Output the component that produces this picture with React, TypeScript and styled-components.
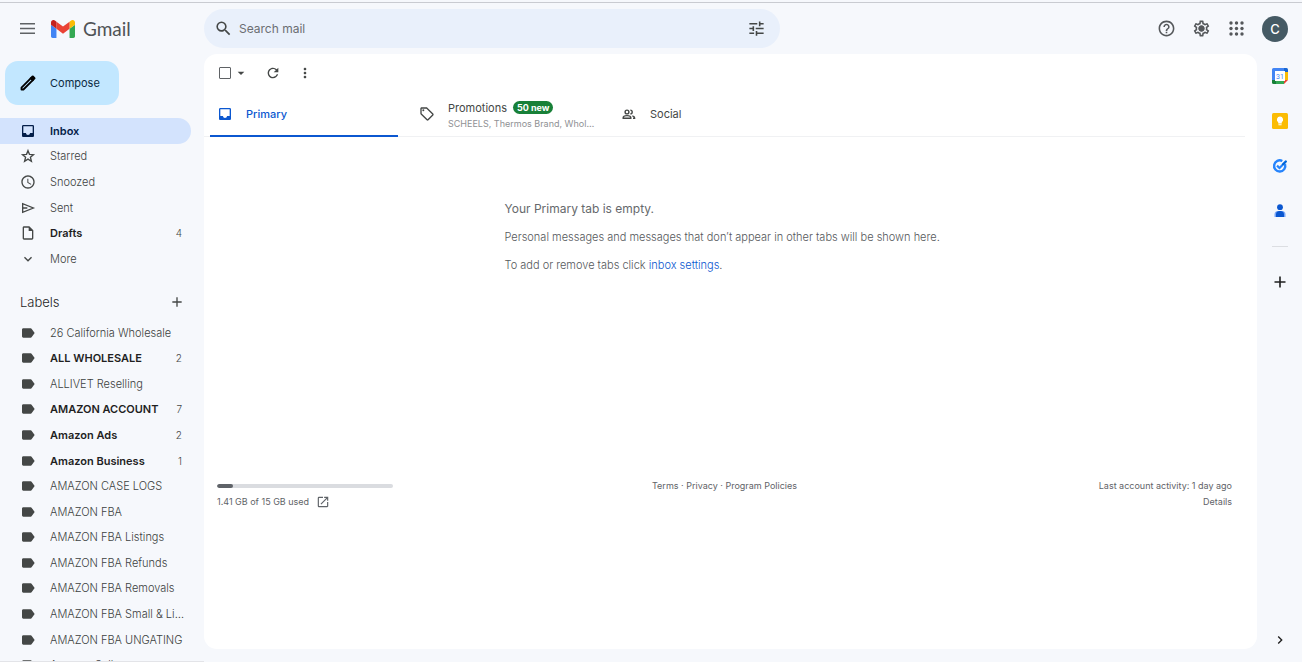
import React from "react";
import styled, { createGlobalStyle } from "styled-components";
import {
  MdSearch, MdTune, MdHelpOutline, MdOutlineSettings, MdInbox,
  MdAccessTime, MdOutlineInsertDriveFile, MdExpandMore, MdAdd, MdLabel, MdArrowDropDown,
  MdRefresh, MdMoreVert, MdOutlineSell, MdOpenInNew, MdChevronRight,
} from "react-icons/md";

const Global = createGlobalStyle`
  *, *::before, *::after { box-sizing: border-box; }
  body { margin: 0; background: #f6f8fc; color: #444746; font: 300 11px/16px Inter, "Liberation Sans", sans-serif; }
  button, input { font: inherit; color: inherit; }
  button { padding: 0; border: 0; background: none; display: flex; align-items: center; justify-content: center; }
  a { color: inherit; text-decoration: none; }
  ul { margin: 0; padding: 0; list-style: none; }
  p, h1, h2 { margin: 0; font-weight: inherit; }
  svg { display: block; flex: none; }
`;

const Page = styled.div`
  height: 100vh;
  padding-top: 2px;
  display: flex;
  flex-direction: column;
  overflow: hidden;
`;
const Header = styled.header`
  border-top: 1px solid #c9cbd1;
  height: 52px;
  flex: none;
  display: flex;
  align-items: center;
  padding-right: 14px;
`;
const Brand = styled.div`
  width: 204px;
  flex: none;
  display: flex;
  align-items: center;
  padding-left: 19px;
`;
const LogoLink = styled.a`
  display: flex;
  align-items: center;
  gap: 8px;
  margin-left: 15px;
  font: 19px/24px Lato, sans-serif;
  color: #505356;
`;
const SearchBox = styled.form`
  flex: 0 1 576px;
  height: 39px;
  border-radius: 20px;
  background: #e9f0fb;
  display: flex;
  align-items: center;
  padding: 0 14px 0 10px;
  gap: 6px;
`;
const SearchInput = styled.input`
  flex: 1;
  min-width: 0;
  border: 0;
  outline: 0;
  background: none;
  padding: 0;
  font-size: 12px;
  font-weight: 400;
  &::placeholder { color: #6b6e72; opacity: 1; }
`;
const HeaderActions = styled.div`
  margin-left: auto;
  display: flex;
  align-items: center;
  gap: 16px;
  color: #55585b;
`;
const Avatar = styled.button`
  width: 26px;
  height: 26px;
  border-radius: 50%;
  background: #455a64;
  color: #fff;
  font-size: 13px;
  font-weight: 500;
`;

const Body = styled.div`
  flex: 1;
  min-height: 0;
  display: flex;
`;
const Sidebar = styled.aside`
  width: 204px;
  flex: none;
  padding-top: 7px;
  overflow: hidden;
  border-bottom: 1px solid #e3e4e8;
`;
const Compose = styled.button`
  width: 114px;
  height: 44px;
  margin-left: 5px;
  border-radius: 13px;
  background: #c2e7ff;
  color: #0a2a42;
  justify-content: flex-start;
  padding-left: 13px;
  gap: 12px;
  font-weight: 400;
  svg { color: #000; }
`;
const FolderArea = styled.div`
  padding-top: 13px;
`;
const NavList = styled.ul<{ $min: number }>`
  display: grid;
  grid-template-columns: minmax(0, 1fr);
  grid-auto-rows: 1fr;
  min-height: ${(p) => p.$min}px;
  padding-right: 13px;
`;
const NavLink = styled.a<{ $active?: boolean; $bold?: boolean }>`
  height: 100%;
  display: flex;
  align-items: center;
  padding: 0 5px 0 20px;
  border-radius: 0 13px 13px 0;
  background: ${(p) => (p.$active ? "#d3e3fd" : "transparent")};
  color: ${(p) => (p.$active ? "#041e49" : p.$bold ? "#1f1f1f" : "#3c3f40")};
  font-weight: ${(p) => (p.$active || p.$bold ? 600 : 300)};
  svg { width: 16px; height: 16px; color: ${(p) => (p.$active ? "#041e49" : "#444746")}; }
`;
const NavText = styled.span`
  flex: 1;
  min-width: 0;
  margin-left: 14px;
  overflow: hidden;
  text-overflow: ellipsis;
  white-space: nowrap;
`;
const Count = styled.span`
  padding-right: 4px;
  font-size: 10px;
  font-weight: 300;
  color: #444746;
`;
const LabelsHead = styled.div`
  display: flex;
  justify-content: space-between;
  align-items: center;
  height: 48px;
  padding: 12px 19px 0 20px;
`;
const LabelsTitle = styled.h2`
  font-size: 13px;
  font-weight: 300;
  color: #1f1f1f;
`;

const Card = styled.main`
  flex: 1;
  min-width: 0;
  margin-bottom: 13px;
  border-radius: 13px;
  background: #fff;
  padding-right: 12px;
`;
const Toolbar = styled.div`
  height: 38px;
  display: flex;
  align-items: center;
  padding-left: 15px;
  color: #444746;
`;
const CheckAll = styled.input`
  appearance: none;
  width: 12px;
  height: 12px;
  margin: 0;
  border: 1px solid #5f6265;
  border-radius: 1px;
`;
const ToolButton = styled.button<{ $gap: number }>`
  margin-left: ${(p) => p.$gap}px;
`;
const Tabs = styled.div`
  height: 45px;
  display: flex;
  padding-left: 6px;
  border-bottom: 1px solid #f0f1f3;
`;
const Tab = styled.button<{ $active?: boolean }>`
  width: 188px;
  height: 45px;
  margin-right: 14px;
  justify-content: flex-start;
  padding-left: 7px;
  gap: 13px;
  text-align: left;
  font-weight: ${(p) => (p.$active ? 500 : 400)};
  color: ${(p) => (p.$active ? "#0b57d0" : "#444746")};
  border-bottom: 2px solid ${(p) => (p.$active ? "#0b57d0" : "transparent")};
`;
const TabBody = styled.span`
  min-width: 0;
  padding-top: 4px;
  display: flex;
  flex-direction: column;
`;
const TabTitle = styled.span`
  display: flex;
  align-items: center;
  gap: 6px;
`;
const Badge = styled.span`
  background: #188038;
  color: #fff;
  border-radius: 7px;
  padding: 0 4px;
  font-size: 9px;
  line-height: 13px;
  font-weight: 700;
`;
const Senders = styled.span`
  width: 150px;
  overflow: hidden;
  text-overflow: ellipsis;
  white-space: nowrap;
  font-size: 9px;
  color: #8f9194;
`;
const Empty = styled.section`
  width: 440px;
  margin: 0 auto;
  padding-top: 64px;
  display: grid;
  gap: 12px;
  color: #55585b;
  white-space: nowrap;
`;
const EmptyTitle = styled.h1`
  font-size: 12px;
  font-weight: 400;
  color: #66696c;
`;
const SettingsLink = styled.a`
  color: #0b57d0;
`;
const Footer = styled.footer`
  margin-top: 205px;
  padding: 0 13px;
  display: grid;
  grid-template-columns: 1fr auto 1fr;
  font-size: 9px;
  font-weight: 400;
  color: #5f6368;
`;
const Meter = styled.div`
  width: 176px;
  height: 4px;
  margin: 6px 0;
  border-radius: 2px;
  background: #dadce0;
  overflow: hidden;
`;
const MeterFill = styled.div`
  height: 100%;
  border-radius: 2px;
  background: #5f6368;
`;
const Usage = styled.a`
  display: flex;
  align-items: center;
  gap: 7px;
`;
const Activity = styled.div`
  text-align: right;
`;

const Rail = styled.aside`
  width: 45px;
  flex: none;
  display: flex;
  flex-direction: column;
  align-items: center;
  padding: 14px 0;
  gap: 29px;
  color: #1f1f1f;
`;
const RailRule = styled.hr`
  width: 16px;
  margin: -2px 0;
  border: 0;
  border-top: 1px solid #dcdee2;
`;
const RailToggle = styled.button`
  margin-top: auto;
`;

const MenuIcon = () => (
  <svg width="17" height="17" viewBox="0 0 17 17" fill="#5f6265">
    <path d="M1 3h15v1.600H1zM1 7.700h15v1.600H1zM1 12.400h15V14H1z" />
  </svg>
);
const PencilIcon = () => (
  <svg width="20" height="20" viewBox="0 0 24 24">
    <path d="M4.200 19.800v-2.300L15.500 6.200l2.300 2.300L6.500 19.800z" fill="none" stroke="currentColor" strokeWidth="2.200" strokeLinejoin="round" />
    <path d="m13.800 6.300 2.900-2.900a1.400 1.400 0 0 1 2 0l1.900 1.900a1.400 1.400 0 0 1 0 2l-2.900 2.900z" fill="currentColor" />
  </svg>
);
const StarIcon = () => (
  <svg width="16" height="16" viewBox="0 0 24 24" fill="none" stroke="currentColor" strokeWidth="2">
    <path d="m12 4 2.200 5.500 6 .5-4.600 3.900 1.500 5.900L12 16.600l-5.100 3.200 1.500-5.900L3.800 10l6-.5z" />
  </svg>
);
const PeopleIcon = () => (
  <svg width="16" height="16" viewBox="0 0 16 16" fill="none" stroke="currentColor" strokeWidth="1.400">
    <circle cx="6" cy="6" r="1.900" />
    <path d="M2.200 12.300v-.8c0-1.200 2.300-1.900 3.800-1.900s3.800.7 3.800 1.900v.8zM9.300 4.100a1.900 1.900 0 0 1 0 3.800M11.300 9.800c1.400.4 2.300 1 2.300 1.900v.6H12" />
  </svg>
);
const PlusIcon = () => (
  <svg width="16" height="16" viewBox="0 0 16 16" stroke="currentColor" strokeWidth="1.600">
    <path d="M8 2.500v11M2.500 8h11" />
  </svg>
);
const GmailLogo = () => (
  <svg width="24" height="18" viewBox="52 42 88 66">
    <path fill="#4285f4" d="M58 108h14V74L52 59v43c0 3.320 2.690 6 6 6" />
    <path fill="#34a853" d="M120 108h14c3.320 0 6-2.690 6-6V59l-20 15" />
    <path fill="#fbbc04" d="M120 48v26l20-15v-8c0-7.420-8.470-11.650-14.400-7.200" />
    <path fill="#ea4335" d="M72 74V48l24 18 24-18v26L96 92" />
    <path fill="#c5221f" d="M52 51v8l20 15V48l-5.600-4.200c-5.940-4.450-14.400-.22-14.400 7.200" />
  </svg>
);
const GearIcon = () => (
  <svg width="19" height="19" viewBox="0 0 24 24">
    <MdOutlineSettings size={24} />
    <circle cx="12" cy="12" r="3.500" fill="currentColor" />
  </svg>
);
const AppsIcon = () => (
  <svg width="19" height="19" viewBox="0 0 19 19" fill="currentColor">
    {[4, 9.5, 15].map((y) => [4, 9.5, 15].map((x) => <circle key={`${x}-${y}`} cx={x} cy={y} r="1.700" />))}
  </svg>
);
const SendIcon = () => (
  <svg width="16" height="16" viewBox="0 0 24 24" fill="none" stroke="currentColor" strokeWidth="2">
    <path d="M4 5.500v13L20 12zM4 12h7" />
  </svg>
);
const CalendarIcon = () => (
  <svg width="16" height="16" viewBox="0 0 16 16">
    <path fill="#4285f4" d="M1.500 0H12v4H4v8H0V1.500Q0 0 1.500 0z" />
    <path fill="#1967d2" d="M12 0h2.500Q16 0 16 1.500V4h-4z" />
    <path fill="#fbbc04" d="M12 4h4v8h-4z" />
    <path fill="#188038" d="M0 12h4v4H1.500Q0 16 0 14.500z" />
    <path fill="#34a853" d="M4 12h8v4H4z" />
    <path fill="#ea4335" d="M12 12h4l-4 4z" />
    <path fill="#fff" d="M3 3h10v10H3z" />
    <text x="8" y="10.500" textAnchor="middle" fontFamily="Roboto, sans-serif" fontSize="7" fontWeight="400" fill="#4285f4">31</text>
  </svg>
);
const KeepIcon = () => (
  <svg width="16" height="16" viewBox="0 0 16 16">
    <rect width="16" height="16" rx="1.500" fill="#fbbc04" />
    <path fill="#fff" d="M8 3.500a3.200 3.200 0 0 0-1.800 5.800v1.200h3.600V9.300A3.200 3.200 0 0 0 8 3.500zM6.400 11.200h3.200v1.100H6.400z" />
  </svg>
);
const TasksIcon = () => (
  <svg width="16" height="16" viewBox="0 0 16 16" fill="none">
    <path d="M13 6.200A5.600 5.600 0 1 1 10.300 3" stroke="#2684fc" strokeWidth="2.400" />
    <path d="M5 7.600 7.500 10 10.500 7" stroke="#2684fc" strokeWidth="2.200" />
    <path d="m11 6.300 2.800-2.800" stroke="#0066da" strokeWidth="2.400" strokeLinecap="round" />
  </svg>
);
const ContactsIcon = () => (
  <svg width="16" height="16" viewBox="0 0 16 16">
    <circle cx="8" cy="4.200" r="2.900" fill="#0b57d0" />
    <path fill="#7aa7f8" d="M2.500 14v-2.500a3.500 3.500 0 0 1 3.500-3.500h4a3.500 3.500 0 0 1 3.500 3.500V14z" />
    <path fill="#0b57d0" d="M4 14v-2.500A3.500 3.500 0 0 1 7 8h2a3.500 3.500 0 0 1 3 3.500V14z" />
  </svg>
);

type Item = { text: string; icon?: React.ReactNode; count?: number; active?: boolean; bold?: boolean };

const folders: Item[] = [
  { text: "Inbox", icon: <MdInbox />, active: true },
  { text: "Starred", icon: <StarIcon /> },
  { text: "Snoozed", icon: <MdAccessTime /> },
  { text: "Sent", icon: <SendIcon /> },
  { text: "Drafts", icon: <MdOutlineInsertDriveFile />, count: 4, bold: true },
  { text: "More", icon: <MdExpandMore /> },
];
const labels: Item[] = [
  { text: "26 California Wholesale" },
  { text: "ALL WHOLESALE", count: 2, bold: true },
  { text: "ALLIVET Reselling" },
  { text: "AMAZON ACCOUNT", count: 7, bold: true },
  { text: "Amazon Ads", count: 2, bold: true },
  { text: "Amazon Business", count: 1, bold: true },
  { text: "AMAZON CASE LOGS" },
  { text: "AMAZON FBA" },
  { text: "AMAZON FBA Listings" },
  { text: "AMAZON FBA Refunds" },
  { text: "AMAZON FBA Removals" },
  { text: "AMAZON FBA Small & Light" },
  { text: "AMAZON FBA UNGATING" },
  { text: "Amazon Seller" },
];

const NavItems = ({ items, min }: { items: Item[]; min: number }) => (
  <NavList $min={min}>
    {items.map((it) => (
      <li key={it.text}>
        <NavLink href="#" $active={it.active} $bold={it.bold}>
          {it.icon ?? <MdLabel />}
          <NavText>{it.text}</NavText>
          {it.count && <Count>{it.count}</Count>}
        </NavLink>
      </li>
    ))}
  </NavList>
);

export default function App() {
  return (
    <Page>
      <Global />
      <Header>
        <Brand>
          <button aria-label="Main menu"><MenuIcon /></button>
          <LogoLink href="#"><GmailLogo />Gmail</LogoLink>
        </Brand>
        <SearchBox role="search">
          <button type="button" aria-label="Search"><MdSearch size={19} color="#444746" /></button>
          <SearchInput type="text" placeholder="Search mail" aria-label="Search mail" />
          <button type="button" aria-label="Search options"><MdTune size={19} color="#444746" /></button>
        </SearchBox>
        <HeaderActions>
          <button aria-label="Support"><MdHelpOutline size={19} /></button>
          <button aria-label="Settings"><GearIcon /></button>
          <button aria-label="Apps"><AppsIcon /></button>
          <Avatar aria-label="Account">C</Avatar>
        </HeaderActions>
      </Header>
      <Body>
        <Sidebar>
          <Compose><PencilIcon />Compose</Compose>
          <nav aria-label="Mail">
            <FolderArea><NavItems items={folders} min={154} /></FolderArea>
            <LabelsHead>
              <LabelsTitle>Labels</LabelsTitle>
              <button aria-label="Create label"><MdAdd size={16} /></button>
            </LabelsHead>
            <NavItems items={labels} min={358} />
          </nav>
        </Sidebar>
        <Card>
          <Toolbar>
            <CheckAll type="checkbox" aria-label="Select all" />
            <ToolButton $gap={2} aria-label="Select"><MdArrowDropDown size={16} /></ToolButton>
            <ToolButton $gap={16} aria-label="Refresh"><MdRefresh size={16} /></ToolButton>
            <ToolButton $gap={16} aria-label="More"><MdMoreVert size={16} /></ToolButton>
          </Toolbar>
          <Tabs role="tablist">
            <Tab role="tab" aria-selected="true" $active><MdInbox size={16} />Primary</Tab>
            <Tab role="tab" aria-selected="false">
              <MdOutlineSell size={16} />
              <TabBody>
                <TabTitle>Promotions<Badge>50 new</Badge></TabTitle>
                <Senders>SCHEELS, Thermos Brand, Wholesale</Senders>
              </TabBody>
            </Tab>
            <Tab role="tab" aria-selected="false"><PeopleIcon />Social</Tab>
          </Tabs>
          <Empty>
            <EmptyTitle>Your Primary tab is empty.</EmptyTitle>
            <p>Personal messages and messages that don’t appear in other tabs will be shown here.</p>
            <p>To add or remove tabs click <SettingsLink href="#">inbox settings</SettingsLink>.</p>
          </Empty>
          <Footer>
            <div>
              <Meter><MeterFill style={{ width: `${Math.floor((1.41 / 15) * 100)}%` }} /></Meter>
              <Usage href="#">1.41 GB of 15 GB used<MdOpenInNew size={14} /></Usage>
            </div>
            <div><a href="#">Terms</a> · <a href="#">Privacy</a> · <a href="#">Program Policies</a></div>
            <Activity>
              <div>Last account activity: 1 day ago</div>
              <a href="#">Details</a>
            </Activity>
          </Footer>
        </Card>
        <Rail>
          <button aria-label="Calendar"><CalendarIcon /></button>
          <button aria-label="Keep"><KeepIcon /></button>
          <button aria-label="Tasks"><TasksIcon /></button>
          <button aria-label="Contacts"><ContactsIcon /></button>
          <RailRule />
          <button aria-label="Get add-ons"><PlusIcon /></button>
          <RailToggle aria-label="Hide side panel"><MdChevronRight size={16} /></RailToggle>
        </Rail>
      </Body>
    </Page>
  );
}
